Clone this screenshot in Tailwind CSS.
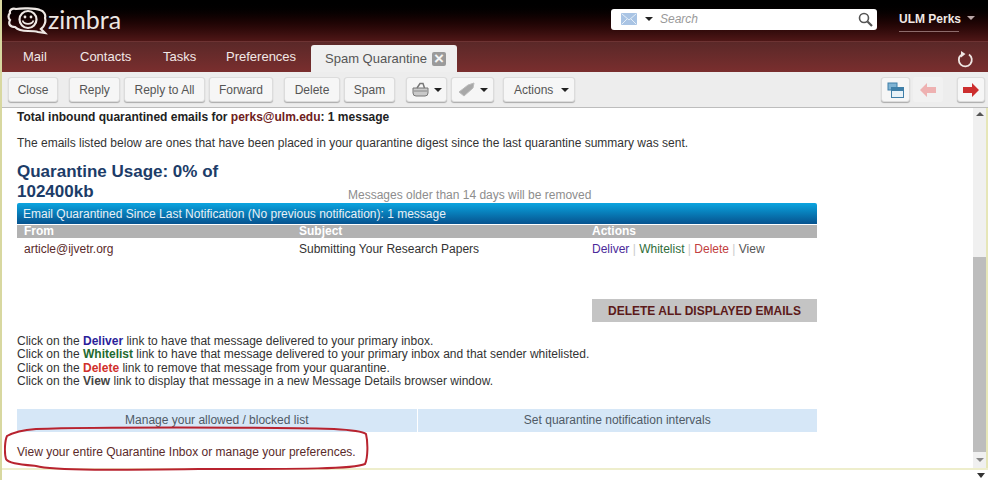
<!DOCTYPE html>
<html lang="en">
<head>
  <meta charset="utf-8">
  <title>Zimbra - Spam Quarantine</title>
  <script src="https://cdn.jsdelivr.net/npm/@tailwindcss/browser@4"></script>
</head>
<body class="font-['Liberation_Sans',Arial,sans-serif] bg-white overflow-hidden">
  <div class="w-[988px] h-[480px] flex flex-col relative overflow-hidden border-l-2 border-[#d8d8a0]">

    <!-- Header -->
    <header class="h-[41px] shrink-0 flex items-center bg-gradient-to-b from-[#000000] to-[#4f1717]">
      <div class="flex items-center ml-[5px] w-[604px] shrink-0">
        <svg width="41" height="28" viewBox="0 0 41 28" fill="none" stroke="#eee8e4" stroke-width="2.2" class="mt-[1px]">
          <path d="M9 2 C5 1 2 3 3 6 C1 8 1 11 3 13 C1 17 3 20 8 20 C11 23 16 24 21 24 C25 24 28 24 31 25 L38 26 L34 22 C38 19 39 14 38 11 C39 8 37 4 33 3 C28 1 14 1 9 2 Z"/>
          <circle cx="21" cy="12.5" r="8.5"/>
          <circle cx="18" cy="10" r="1.4" fill="#eee8e4" stroke="none"/>
          <circle cx="24" cy="10" r="1.4" fill="#eee8e4" stroke="none"/>
          <path d="M15.5 13.5 C17 18 25 18 26.5 13.5" stroke-width="1.7"/>
        </svg>
        <span class="font-['Lato',sans-serif] font-normal text-[25px] leading-none text-[#ece6e2] ml-[0px] mb-[3px]">zimbra</span>
      </div>
      <div class="w-[266px] h-[21px] bg-white rounded-[3px] flex items-center pl-[10px] pr-[4px] mb-[3px]">
        <svg width="16" height="12" viewBox="0 0 16 12"><rect width="16" height="12" rx="1" fill="#a9c4e4"/><path d="M1 1 L8 7 L15 1 M1 11 L6 6 M15 11 L10 6" stroke="#e4eef8" fill="none"/></svg>
        <span class="ml-[8px] w-0 h-0 border-x-[4px] border-x-transparent border-t-[4px] border-t-[#222]"></span>
        <span class="ml-[7px] text-[12px] italic text-[#999]">Search</span>
        <svg class="ml-auto" width="15" height="15" viewBox="0 0 15 15" fill="none" stroke="#555" stroke-width="1.6"><circle cx="6" cy="6" r="4.5"/><path d="M9.5 9.5 L14 14" stroke-width="2.2"/></svg>
      </div>
      <div class="ml-[22px] flex items-center mb-[3px]">
        <span class="text-[12px] font-bold text-[#f0e8e4] border-b border-[#8d6b6b] pb-[3px] pt-[3px] w-[60px] whitespace-nowrap">ULM Perks</span>
        <span class="ml-[8px] mb-[3px] w-0 h-0 border-x-[4px] border-x-transparent border-t-[4px] border-t-[#b9a8a8]"></span>
      </div>
    </header>

    <!-- Tab bar -->
    <nav class="h-[31px] shrink-0 flex items-end bg-gradient-to-b from-[#5a2828] to-[#7a2e2e] border-t border-[#6d3333] text-[13px] text-[#f2e8e6]">
      <span class="ml-[21px] w-[57px] h-full flex items-center">Mail</span>
      <span class="w-[83px] h-full flex items-center">Contacts</span>
      <span class="w-[63px] h-full flex items-center">Tasks</span>
      <span class="w-[85px] h-full flex items-center">Preferences</span>
      <div class="h-[27px] w-[146px] bg-[#efefef] rounded-t-[3px] flex items-center pl-[14px] text-[#555]">
        <span class="w-[102px] whitespace-nowrap">Spam Quarantine</span>
        <span class="ml-[5px] w-[14px] h-[14px] bg-[#9a9a9a] rounded-[2px] text-[#f4f4f4] text-[17px] leading-[14px] text-center font-bold">×</span>
      </div>
      <svg class="ml-auto mr-[14px] mb-[4px]" width="18" height="18" viewBox="0 0 18 18" fill="none" stroke="#efe6e2" stroke-width="1.8"><path d="M5 5 A6.5 6.5 0 1 0 13 4.5"/><path d="M5 1 L9.5 4 L5 7.5 Z" fill="#efe6e2" stroke="none"/></svg>
    </nav>

    <!-- Toolbar -->
    <div class="h-[36px] shrink-0 bg-[#ededed] border-b border-[#bdbdbd] flex items-center pl-[6px] text-[12px] text-[#555]">
      <button class="w-[50px] h-[25px] bg-[#f6f6f6] rounded-[3px] border border-[#dcdcdc] shadow-[0_1px_1px_#aaa]">Close</button>
      <button class="ml-[11px] w-[51px] h-[25px] bg-[#f6f6f6] rounded-[3px] border border-[#dcdcdc] shadow-[0_1px_1px_#aaa]">Reply</button>
      <button class="ml-[4px] w-[81px] h-[25px] bg-[#f6f6f6] rounded-[3px] border border-[#dcdcdc] shadow-[0_1px_1px_#aaa]">Reply to All</button>
      <button class="ml-[4px] w-[64px] h-[25px] bg-[#f6f6f6] rounded-[3px] border border-[#dcdcdc] shadow-[0_1px_1px_#aaa]">Forward</button>
      <button class="ml-[11px] w-[56px] h-[25px] bg-[#f6f6f6] rounded-[3px] border border-[#dcdcdc] shadow-[0_1px_1px_#aaa]">Delete</button>
      <button class="ml-[4px] w-[51px] h-[25px] bg-[#f6f6f6] rounded-[3px] border border-[#dcdcdc] shadow-[0_1px_1px_#aaa]">Spam</button>
      <button class="ml-[11px] w-[41px] h-[25px] bg-[#f6f6f6] rounded-[3px] border border-[#dcdcdc] shadow-[0_1px_1px_#aaa] flex items-center justify-center gap-[5px]">
        <svg width="17" height="15" viewBox="0 0 17 15"><path d="M1 6 H16 V11 Q16 14 13 14 H4 Q1 14 1 11 Z" fill="#c9c9c9" stroke="#777"/><path d="M2 9 H15" stroke="#888"/><path d="M5 6 L8 1.5 H11 L12.5 6" fill="none" stroke="#777" stroke-width="1.5"/></svg>
        <span class="w-0 h-0 border-x-[4px] border-x-transparent border-t-[4px] border-t-[#222]"></span>
      </button>
      <button class="ml-[4px] w-[43px] h-[25px] bg-[#f6f6f6] rounded-[3px] border border-[#dcdcdc] shadow-[0_1px_1px_#aaa] flex items-center justify-center gap-[5px]">
        <svg width="17" height="15" viewBox="0 0 17 15"><path d="M1 10 L10 3 L16 1 L15 6 L6 14 Z" fill="#a8a8a8" stroke="#bbb"/></svg>
        <span class="w-0 h-0 border-x-[4px] border-x-transparent border-t-[4px] border-t-[#222]"></span>
      </button>
      <button class="ml-[9px] w-[72px] h-[25px] bg-[#f6f6f6] rounded-[3px] border border-[#dcdcdc] shadow-[0_1px_1px_#aaa] flex items-center pl-[10px] gap-[8px]">
        Actions
        <span class="w-0 h-0 border-x-[4px] border-x-transparent border-t-[4px] border-t-[#222]"></span>
      </button>
      <button class="ml-[306px] w-[29px] h-[25px] bg-[#f6f6f6] rounded-[3px] border border-[#dcdcdc] shadow-[0_1px_1px_#aaa] flex items-center justify-center">
        <svg width="17" height="16" viewBox="0 0 17 16" fill="none" stroke="#3f7fa8"><rect x="1" y="1" width="9" height="7" fill="#7fb3d3"/><rect x="4.5" y="5.5" width="12" height="10" fill="#e8f2f8"/><path d="M4.5 7.5 H16.5" stroke="#3f7fa8" stroke-width="3"/></svg>
      </button>
      <button class="ml-[3px] w-[30px] h-[25px] bg-[#f1f1f1] rounded-[3px] flex items-center justify-center">
        <svg width="16" height="14" viewBox="0 0 16 14"><path d="M0 7 L7 0 V4 H16 V10 H7 V14 Z" fill="#eeb1b1"/></svg>
      </button>
      <button class="ml-[14px] w-[28px] h-[25px] bg-[#f6f6f6] rounded-[3px] border border-[#dcdcdc] shadow-[0_1px_1px_#aaa] flex items-center justify-center">
        <svg width="16" height="14" viewBox="0 0 16 14"><path d="M16 7 L9 0 V4 H0 V10 H9 V14 Z" fill="#cc2e2e"/></svg>
      </button>
    </div>

    <!-- Body with scrollbar -->
    <div class="h-[360px] shrink-0 flex bg-white">
      <main class="w-[971px] pl-[15px] text-[12px] text-[#333]">
        <p class="mt-[2px] leading-[14px] font-bold text-[#222]">Total inbound quarantined emails for <span class="text-[#6e2020]">perks@ulm.edu</span>: 1 message</p>
        <p class="mt-[12px] leading-[14px]">The emails listed below are ones that have been placed in your quarantine digest since the last quarantine summary was sent.</p>

        <div class="mt-[12px] w-[800px] flex items-end">
          <h2 class="w-[220px] text-[17px] leading-[20px] font-bold text-[#1c3c68]">Quarantine Usage: 0% of 102400kb</h2>
          <span class="ml-[111px] text-[12px] leading-[14px] text-[#8d8d8d]">Messages older than 14 days will be removed</span>
        </div>

        <div class="w-[800px] mt-[1px] h-[21px] rounded-t-[2px] bg-gradient-to-b from-[#0ba5e0] to-[#07538f] text-[12px] text-[#e8f0f6] flex items-center pl-[6px]">Email Quarantined Since Last Notification (No previous notification): 1 message</div>
        <div class="w-[800px] h-[13px] mt-[1px] bg-[#b2b2b2] grid grid-cols-[282px_293px_1fr] text-[12px] leading-[13px] font-bold text-white">
          <span class="pl-[7px]">From</span><span>Subject</span><span>Actions</span>
        </div>
        <div class="w-[800px] mt-[4px] grid grid-cols-[282px_293px_1fr] leading-[14px]">
          <span class="pl-[7px] text-[#5a2a2a]">article@ijvetr.org</span>
          <span>Submitting Your Research Papers</span>
          <span><span class="text-[#4b2a9a]">Deliver</span> <span class="text-[#ccc]">|</span> <span class="text-[#2f6d3a]">Whitelist</span> <span class="text-[#ccc]">|</span> <span class="text-[#c24040]">Delete</span> <span class="text-[#ccc]">|</span> <span class="text-[#555]">View</span></span>
        </div>
        <div class="w-[800px] mt-[43px] flex justify-end">
          <div class="w-[225px] h-[23px] bg-[#c4c4c4] text-[#5c1a1a] font-bold flex items-center justify-center">DELETE ALL DISPLAYED EMAILS</div>
        </div>

        <div class="mt-[13px] leading-[13.4px] text-[#333]">
          <p>Click on the <b class="text-[#2b1f9a]">Deliver</b> link to have that message delivered to your primary inbox.</p>
          <p>Click on the <b class="text-[#1f6a30]">Whitelist</b> link to have that message delivered to your primary inbox and that sender whitelisted.</p>
          <p>Click on the <b class="text-[#d0302c]">Delete</b> link to remove that message from your quarantine.</p>
          <p>Click on the <b class="text-[#444]">View</b> link to display that message in a new Message Details browser window.</p>
        </div>

        <div class="w-[800px] h-[23px] mt-[20px] grid grid-cols-2 gap-[1px] text-[#4f5a66]">
          <div class="bg-[#d6e7f7] flex items-center justify-center">Manage your allowed / blocked list</div>
          <div class="bg-[#d6e7f7] flex items-center justify-center">Set quarantine notification intervals</div>
        </div>
        <p class="mt-[13px] leading-[14px] text-[#5a2a2a]">View your entire Quarantine Inbox or manage your preferences.</p>
      </main>
      <div class="w-[15px] h-full bg-[#f0f0f0] flex flex-col items-center border-r-2 border-[#e6e6b8]">
        <span class="mt-[4px] w-0 h-0 border-x-[4px] border-x-transparent border-b-[4px] border-b-[#555]"></span>
        <div class="mt-auto w-full h-[195px] bg-[#bdbdbd]"></div>
        <span class="mt-[6px] mb-[6px] w-0 h-0 border-x-[4px] border-x-transparent border-t-[4px] border-t-[#888]"></span>
      </div>
    </div>

    <!-- Bottom strip below the frame -->
    <div class="flex-1 bg-white border-t-2 border-[#eeeecc] flex justify-end pr-[3px] pt-[3px]">
      <span class="w-0 h-0 border-x-[4px] border-x-transparent border-t-[5px] border-t-[#333]"></span>
    </div>

    <!-- Red hand-drawn highlight round the quarantine inbox line -->
    <svg class="absolute left-[2px] top-[426px]" width="372" height="48" viewBox="0 0 372 48" fill="none" stroke="#b8232f" stroke-width="2">
      <path d="M32 3 C90 1 250 1 330 3 C348 4 358 5 362 8 C364 16 364 32 361 38 C350 43 300 43 200 43 C120 44 50 45 32 40 C14 38 4 37 2 33 C0 26 1 14 3 10 C10 6 20 4 32 3 Z"/>
    </svg>
  </div>
</body>
</html>
